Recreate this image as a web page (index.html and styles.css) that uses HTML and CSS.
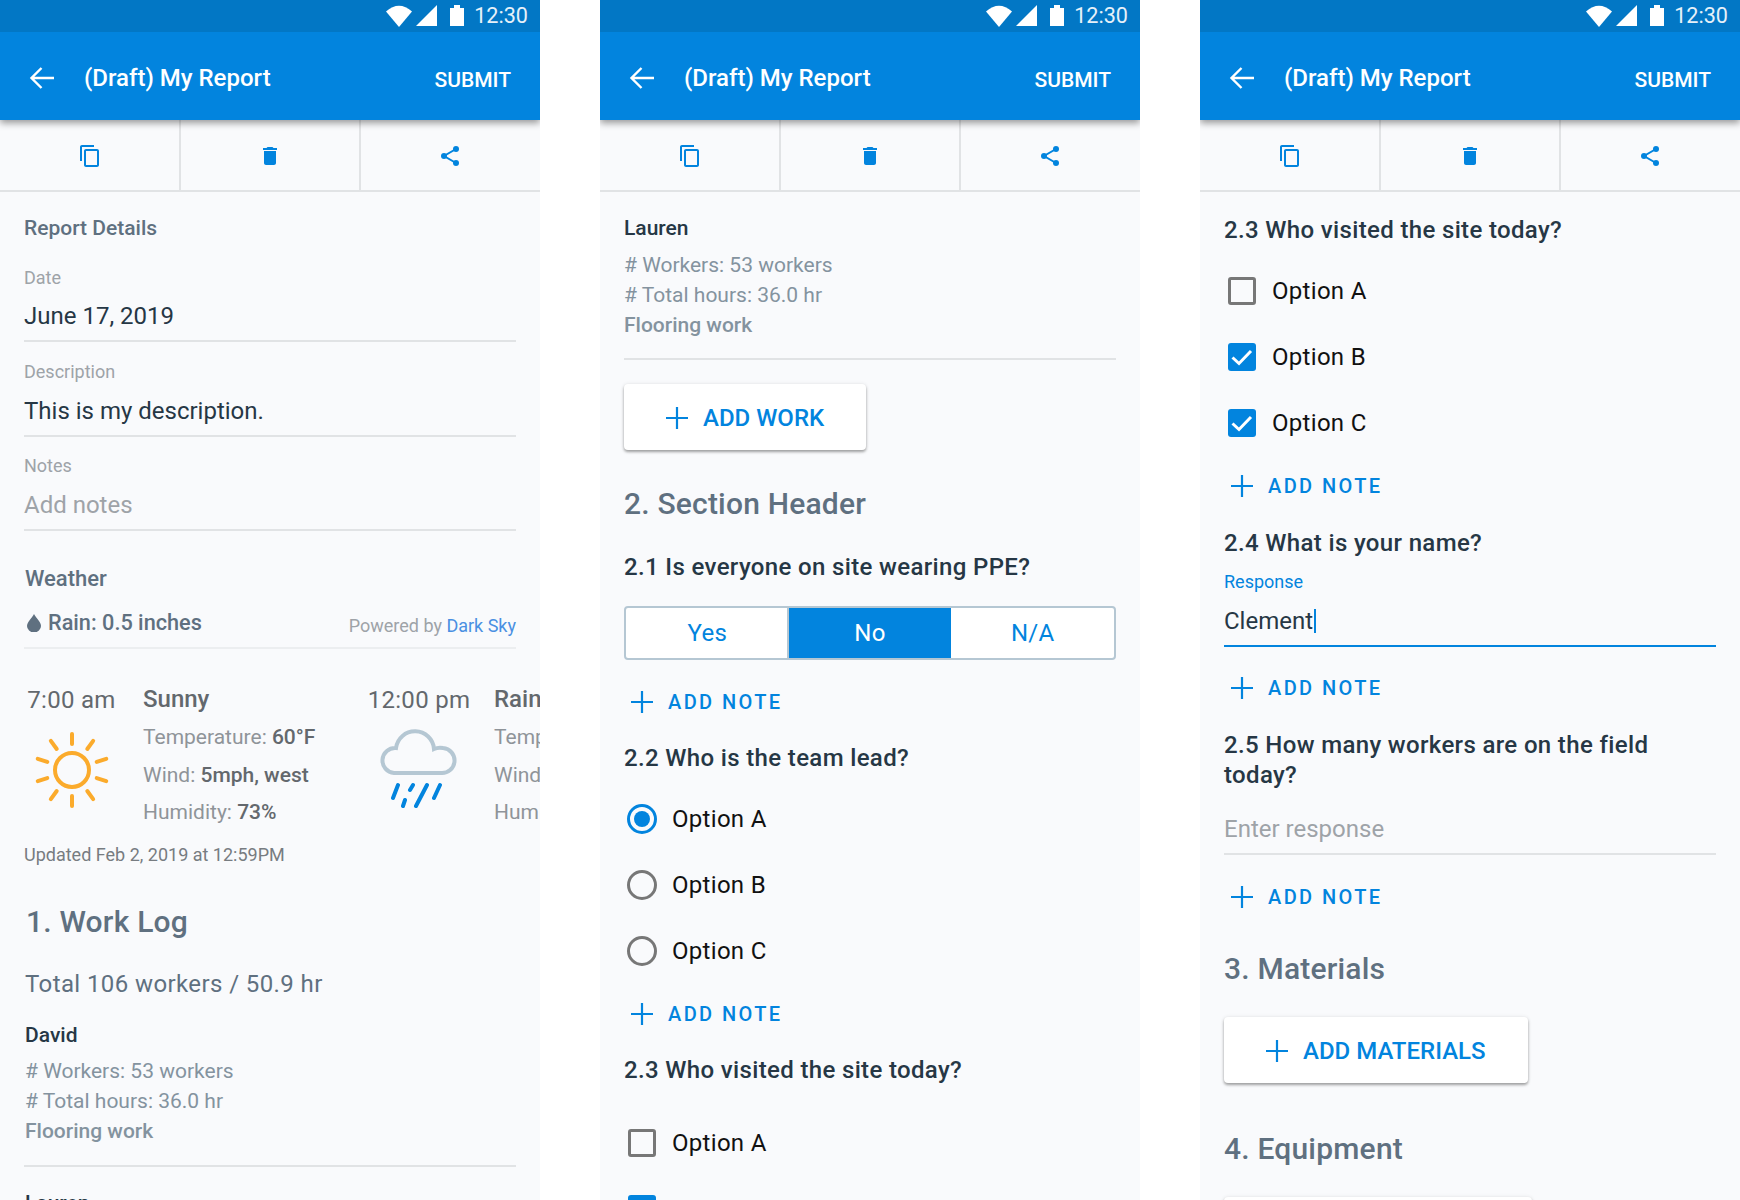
FILE: index.html
```html
<!DOCTYPE html>
<html lang="en">
<head>
<meta charset="utf-8">
<title>My Report</title>
<link rel="stylesheet" href="styles.css">
</head>
<body>
<svg class="defs" width="0" height="0" aria-hidden="true">
  <defs>
    <symbol id="plus" viewBox="0 0 22 22"><path d="M11 0V22M0 11H22" fill="none" stroke="currentColor" stroke-width="2.2"/></symbol>
    <symbol id="tick" viewBox="0 0 28 28"><path d="M4.500 14.500L11 20.500L23 8" fill="none" stroke="#fff" stroke-width="3"/></symbol>
    <symbol id="head" viewBox="0 0 540 120">
      <path d="M399 27L412 11.500Q399 0 386 11.500Z" fill="#fff"/>
      <path d="M416 26H437V5Z" fill="#fff"/>
      <path d="M450 8H454V5H460V8H464V26H450Z" fill="#fff"/>
      <path d="M54 78H32M41.500 68L31.500 78L41.500 88" fill="none" stroke="#fff" stroke-width="2.400"/>
    </symbol>
  </defs>
</svg>
<main class="screens">

  <section class="phone">
    <header class="appbar">
      <svg class="appbar-art"><use href="#head"/></svg>
      <div class="statusbar"><span class="clock">12:30</span></div>
      <div class="titlebar"><span class="title">(Draft) My Report</span><span class="submit">SUBMIT</span></div>
    </header>
    <nav class="tabs">
      <div class="tab"><svg class="tab-icon" viewBox="0 0 24 24"><path d="M16 1H4c-1.100 0-2 .9-2 2v14h2V3h12V1zm3 4H8c-1.100 0-2 .9-2 2v14c0 1.100.9 2 2 2h11c1.100 0 2-.9 2-2V7c0-1.100-.9-2-2-2zm0 16H8V7h11v14z"/></svg></div>
      <div class="tab"><svg class="tab-icon" viewBox="0 0 24 24"><path d="M6 19c0 1.100.9 2 2 2h8c1.100 0 2-.9 2-2V7H6v12zM19 4h-3.500l-1-1h-5l-1 1H5v2h14V4z"/></svg></div>
      <div class="tab"><svg class="tab-icon" viewBox="0 0 24 24"><circle cx="18" cy="5" r="3"/><circle cx="6" cy="12" r="3"/><circle cx="18" cy="19" r="3"/><path d="M18 5L6 12L18 19" fill="none" stroke="currentColor" stroke-width="2"/></svg></div>
    </nav>
    <div class="content">
      <h3 class="sub m22">Report Details</h3>
      <div class="field field-first m25"><div class="label">Date</div><div class="value">June 17, 2019</div></div>
      <div class="field m19"><div class="label">Description</div><div class="value">This is my description.</div></div>
      <div class="field m18"><div class="label">Notes</div><div class="value placeholder">Add notes</div></div>
      <h3 class="sub sub-large nudged m34">Weather</h3>
      <div class="rain-row">
        <span class="rain"><svg class="drop" viewBox="0 0 14 18"><path d="M7 0C9 4 14 8 14 12A7 6.500 0 0 1 0 12C0 8 5 4 7 0Z"/></svg>Rain: 0.5 inches</span>
        <span class="powered">Powered by <a class="link">Dark Sky</a></span>
      </div>
      <div class="weather">
        <div class="wx-time">
          <div class="time">7:00 am</div>
          <svg class="sun" viewBox="-40 -40 80 80">
            <circle r="17" fill="none" stroke="#fbab2c" stroke-width="4"/>
            <g stroke="#fbab2c" stroke-width="4" stroke-linecap="round">
              <path d="M0 -26V-36"/><path d="M0 -26V-36" transform="rotate(36)"/><path d="M0 -26V-36" transform="rotate(72)"/><path d="M0 -26V-36" transform="rotate(108)"/><path d="M0 -26V-36" transform="rotate(144)"/><path d="M0 -26V-36" transform="rotate(180)"/><path d="M0 -26V-36" transform="rotate(216)"/><path d="M0 -26V-36" transform="rotate(252)"/><path d="M0 -26V-36" transform="rotate(288)"/><path d="M0 -26V-36" transform="rotate(324)"/>
            </g>
          </svg>
        </div>
        <div class="wx-info">
          <div class="cond">Sunny</div>
          <div class="stat">Temperature: <b>60°F</b></div>
          <div class="stat">Wind: <b>5mph, west</b></div>
          <div class="stat">Humidity: <b>73%</b></div>
        </div>
        <div class="wx-time">
          <div class="time">12:00 pm</div>
          <svg class="cloud" viewBox="0 0 78 80">
            <path d="M15 45H62A12.500 12.500 0 0 0 64 20A14 14 0 0 0 55 21A19.100 19.100 0 0 0 17 20A12.500 12.500 0 0 0 15 45Z" fill="none" stroke="#b5c7d3" stroke-width="4"/>
            <path d="M19 57L14 70M34 57L31 62M48 57L37 78M61 57L55 70M26 72L24 78" fill="none" stroke="#0284de" stroke-width="4" stroke-linecap="round"/>
          </svg>
        </div>
        <div class="wx-info">
          <div class="cond">Rain</div>
          <div class="stat">Temperature</div>
          <div class="stat">Wind</div>
          <div class="stat">Humidity</div>
        </div>
      </div>
      <p class="updated">Updated Feb 2, 2019 at 12:59PM</p>
      <h2 class="section nudged-more m35">1. Work Log</h2>
      <p class="total nudged">Total 106 workers / 50.9 hr</p>
      <article class="work work-nudged m21">
        <h4 class="name">David</h4>
        <p class="detail first"># Workers: 53 workers</p>
        <p class="detail"># Total hours: 36.0 hr</p>
        <p class="detail strong">Flooring work</p>
      </article>
      <article class="work work-nudged m22">
        <h4 class="name">Lauren</h4>
      </article>
    </div>
  </section>

  <section class="phone">
    <header class="appbar">
      <svg class="appbar-art"><use href="#head"/></svg>
      <div class="statusbar"><span class="clock">12:30</span></div>
      <div class="titlebar"><span class="title">(Draft) My Report</span><span class="submit">SUBMIT</span></div>
    </header>
    <nav class="tabs">
      <div class="tab"><svg class="tab-icon" viewBox="0 0 24 24"><path d="M16 1H4c-1.100 0-2 .9-2 2v14h2V3h12V1zm3 4H8c-1.100 0-2 .9-2 2v14c0 1.100.9 2 2 2h11c1.100 0 2-.9 2-2V7c0-1.100-.9-2-2-2zm0 16H8V7h11v14z"/></svg></div>
      <div class="tab"><svg class="tab-icon" viewBox="0 0 24 24"><path d="M6 19c0 1.100.9 2 2 2h8c1.100 0 2-.9 2-2V7H6v12zM19 4h-3.500l-1-1h-5l-1 1H5v2h14V4z"/></svg></div>
      <div class="tab"><svg class="tab-icon" viewBox="0 0 24 24"><circle cx="18" cy="5" r="3"/><circle cx="6" cy="12" r="3"/><circle cx="18" cy="19" r="3"/><path d="M18 5L6 12L18 19" fill="none" stroke="currentColor" stroke-width="2"/></svg></div>
    </nav>
    <div class="content">
      <article class="work m22">
        <h4 class="name">Lauren</h4>
        <p class="detail first"># Workers: 53 workers</p>
        <p class="detail"># Total hours: 36.0 hr</p>
        <p class="detail strong">Flooring work</p>
      </article>
      <button class="raised m24"><svg class="plus"><use href="#plus"/></svg>ADD WORK</button>
      <h2 class="section m34">2. Section Header</h2>
      <h4 class="question m27">2.1 Is everyone on site wearing PPE?</h4>
      <div class="segmented">
        <span class="seg">Yes</span><span class="seg active">No</span><span class="seg">N/A</span>
      </div>
      <div class="note m27"><svg class="plus"><use href="#plus"/></svg>ADD NOTE</div>
      <h4 class="question m25">2.2 Who is the team lead?</h4>
      <div class="options m12">
        <label class="option"><span class="radio on"></span>Option A</label>
        <label class="option"><span class="radio"></span>Option B</label>
        <label class="option"><span class="radio"></span>Option C</label>
      </div>
      <div class="note m15"><svg class="plus"><use href="#plus"/></svg>ADD NOTE</div>
      <h4 class="question m25">2.3 Who visited the site today?</h4>
      <div class="options m24">
        <label class="option"><span class="check"></span>Option A</label>
        <label class="option"><span class="check on"><svg class="tick"><use href="#tick"/></svg></span>Option B</label>
      </div>
    </div>
  </section>

  <section class="phone">
    <header class="appbar">
      <svg class="appbar-art"><use href="#head"/></svg>
      <div class="statusbar"><span class="clock">12:30</span></div>
      <div class="titlebar"><span class="title">(Draft) My Report</span><span class="submit">SUBMIT</span></div>
    </header>
    <nav class="tabs">
      <div class="tab"><svg class="tab-icon" viewBox="0 0 24 24"><path d="M16 1H4c-1.100 0-2 .9-2 2v14h2V3h12V1zm3 4H8c-1.100 0-2 .9-2 2v14c0 1.100.9 2 2 2h11c1.100 0 2-.9 2-2V7c0-1.100-.9-2-2-2zm0 16H8V7h11v14z"/></svg></div>
      <div class="tab"><svg class="tab-icon" viewBox="0 0 24 24"><path d="M6 19c0 1.100.9 2 2 2h8c1.100 0 2-.9 2-2V7H6v12zM19 4h-3.500l-1-1h-5l-1 1H5v2h14V4z"/></svg></div>
      <div class="tab"><svg class="tab-icon" viewBox="0 0 24 24"><circle cx="18" cy="5" r="3"/><circle cx="6" cy="12" r="3"/><circle cx="18" cy="19" r="3"/><path d="M18 5L6 12L18 19" fill="none" stroke="currentColor" stroke-width="2"/></svg></div>
    </nav>
    <div class="content">
      <h4 class="question m22">2.3 Who visited the site today?</h4>
      <div class="options m12">
        <label class="option"><span class="check"></span>Option A</label>
        <label class="option"><span class="check on"><svg class="tick"><use href="#tick"/></svg></span>Option B</label>
        <label class="option"><span class="check on"><svg class="tick"><use href="#tick"/></svg></span>Option C</label>
      </div>
      <div class="note m15"><svg class="plus"><use href="#plus"/></svg>ADD NOTE</div>
      <h4 class="question m26">2.4 What is your name?</h4>
      <div class="field focused m12"><div class="label">Response</div><div class="value">Clement<span class="caret"></span></div></div>
      <div class="note m26"><svg class="plus"><use href="#plus"/></svg>ADD NOTE</div>
      <h4 class="question wrap m27">2.5 How many workers are on the field today?</h4>
      <div class="field m23"><div class="value placeholder">Enter response</div></div>
      <div class="note m27"><svg class="plus"><use href="#plus"/></svg>ADD NOTE</div>
      <h2 class="section m37">3. Materials</h2>
      <button class="raised m28"><svg class="plus"><use href="#plus"/></svg>ADD MATERIALS</button>
      <h2 class="section m46">4. Equipment</h2>
      <button class="raised m28"><svg class="plus"><use href="#plus"/></svg>ADD EQUIPMENT</button>
    </div>
  </section>

</main>
</body>
</html>
```
FILE: styles.css
```css
* { box-sizing: border-box; }
html, body { margin: 0; padding: 0; background: #fff; }
body { font-family: Roboto, "Liberation Sans", sans-serif; }
h2, h3, h4, p { margin: 0; }
.defs { position: absolute; }

.screens { display: flex; gap: 60px; height: 1200px; overflow: hidden; }
.phone { position: relative; width: 540px; height: 1200px; background: #f9fafc; overflow: hidden; flex: none; }

.appbar { position: relative; z-index: 2; height: 120px; background: #0284de; color: #fff; box-shadow: 0 3px 7px rgba(0,0,0,.4); }
.appbar-art { position: absolute; left: 0; top: 0; width: 540px; height: 120px; z-index: 1; }
.statusbar { height: 32px; background: #0277c5; display: flex; justify-content: flex-end; align-items: center; padding-right: 12px; }
.clock { font-size: 21.600px; line-height: 30px; color: #e6f1f9; position: relative; z-index: 2; }
.titlebar { height: 88px; display: flex; justify-content: space-between; padding: 0 29px 0 84px; }
.title { font-size: 24px; font-weight: 500; line-height: 32px; margin-top: 30px; }
.submit { font-size: 21px; font-weight: 500; line-height: 30px; margin-top: 33px; }

.tabs { display: flex; height: 72px; border-bottom: 2px solid #e1e3e5; }
.tab { flex: 1; display: flex; align-items: center; justify-content: center; padding-top: 2px; color: #0284de; box-shadow: 1px 0 0 #e1e3e5, inset -1px 0 0 #e1e3e5; }
.tab:last-child { box-shadow: none; }
.tab-icon { width: 24px; height: 24px; fill: currentColor; }

.content { padding: 0 24px; }
.sub { font-size: 21px; font-weight: 500; line-height: 28px; color: #5f7080; }
.sub-large { font-size: 22px; }
.nudged { padding-left: 1px; }
.nudged-more { padding-left: 2px; }
.work-nudged .name, .work-nudged .detail { padding-left: 1px; }

.m12 { margin-top: 12px; } .m15 { margin-top: 15px; } .m18 { margin-top: 18px; } .m19 { margin-top: 19px; }
.m21 { margin-top: 21px; } .m22 { margin-top: 22px; } .m23 { margin-top: 23px; } .m24 { margin-top: 24px; } .m25 { margin-top: 25px; }
.m26 { margin-top: 26px; } .m27 { margin-top: 27px; } .m28 { margin-top: 28px; }
.m34 { margin-top: 34px; } .m35 { margin-top: 35px; } .m37 { margin-top: 37px; } .m46 { margin-top: 46px; }

.field { border-bottom: 2px solid #e1e3e5; padding-bottom: 8px; }
.label { font-size: 18px; line-height: 22px; color: #9ea3a8; margin-bottom: 12px; }
.field-first .label { margin-bottom: 11px; }
.value { font-size: 24px; line-height: 32px; color: #263745; }
.placeholder { color: #9ea3a8; }
.focused { border-bottom-color: #0284de; }
.focused .label { color: #0284de; }
.caret { display: inline-block; width: 2px; height: 24px; background: #0284de; margin-left: 1px; vertical-align: -4px; }

.rain-row { display: flex; justify-content: space-between; align-items: flex-end; margin-top: 15px; padding-bottom: 9px; border-bottom: 2px solid #eceef0; line-height: 30px; }
.rain { display: flex; align-items: center; font-size: 21.700px; font-weight: 500; color: #5f7080; }
.drop { width: 14px; height: 18px; fill: #5f7080; margin: 0 7px 0 3px; }
.powered { font-size: 18px; line-height: 26px; color: #9ea3a8; position: relative; top: 1px; }
.link { color: #4a90e2; }

.weather { display: grid; grid-template-columns: 95px 201px 102px 1fr; column-gap: 24px; margin-top: 35px; white-space: nowrap; width: 560px; }
.wx-time { display: flex; flex-direction: column; align-items: center; }
.time { font-size: 24px; line-height: 32px; color: #63686d; letter-spacing: .3px; }
.sun { width: 80px; height: 80px; margin-top: 14px; display: block; }
.cloud { width: 78px; height: 80px; margin-top: 12px; display: block; margin-left: -2px; }
.cond { font-size: 24px; font-weight: 500; line-height: 32px; color: #63686d; margin: -1px 0 4px; }
.stat { font-size: 21px; line-height: 37.500px; color: #8f9499; }
.stat b { font-weight: 500; color: #63686d; }
.updated { font-size: 18px; line-height: 24px; color: #777c81; margin-top: 11px; }

.section { font-size: 30px; font-weight: 500; line-height: 40px; color: #5f7080; letter-spacing: .2px; }
.total { font-size: 24px; line-height: 32px; color: #5f7080; margin-top: 26px; letter-spacing: .4px; }
.work { border-bottom: 2px solid #e1e3e5; padding-bottom: 18px; }
.work-nudged { padding-bottom: 19px; }
.work:last-child { border-bottom: 0; }
.name { font-size: 21px; font-weight: 500; line-height: 28px; color: #263745; }
.detail { font-size: 21px; line-height: 30px; color: #84939f; }
.detail.first { margin-top: 8px; }
.work-nudged .detail.first { margin-top: 7px; }
.detail.strong { font-weight: 500; }

.raised { display: inline-flex; align-items: center; height: 66px; padding: 1px 42px 0; border: 0; border-radius: 4px; background: #fff; color: #0284de; font: 500 24px/32px Roboto, sans-serif; box-shadow: 0 2px 3px rgba(0,0,0,.35), 0 0 4px rgba(0,0,0,.08); }
.plus { width: 22px; height: 22px; margin-right: 15px; flex: none; }
.question { font-size: 24px; font-weight: 500; line-height: 32px; color: #263745; letter-spacing: .35px; }
.question.wrap { line-height: 30px; }

.segmented { display: flex; height: 54px; margin-top: 23px; border: 2px solid #b5c7d3; border-radius: 4px; background: #fff; overflow: hidden; }
.seg { flex: 1; display: flex; align-items: center; justify-content: center; font-size: 24px; color: #0284de; letter-spacing: .3px; }
.seg.active { background: #0284de; color: #fff; box-shadow: -2px 0 0 #b5c7d3; }

.note { display: flex; align-items: center; height: 30px; padding-left: 7px; color: #0284de; font-size: 20px; font-weight: 500; letter-spacing: 2.400px; }

.option { display: flex; align-items: center; height: 66px; font-size: 24px; color: #111; letter-spacing: .3px; }
.radio { width: 30px; height: 30px; margin: 0 15px 0 3px; border: 3.500px solid #777; border-radius: 50%; flex: none; }
.radio.on { border-color: #0284de; position: relative; }
.radio.on::after { content: ""; position: absolute; inset: 4px; border-radius: 50%; background: #0284de; }
.check { width: 28px; height: 28px; margin: 0 16px 0 4px; border: 3.500px solid #777; border-radius: 3px; flex: none; }
.check.on { border: 0; background: #0284de; }
.tick { display: block; width: 28px; height: 28px; }
```
